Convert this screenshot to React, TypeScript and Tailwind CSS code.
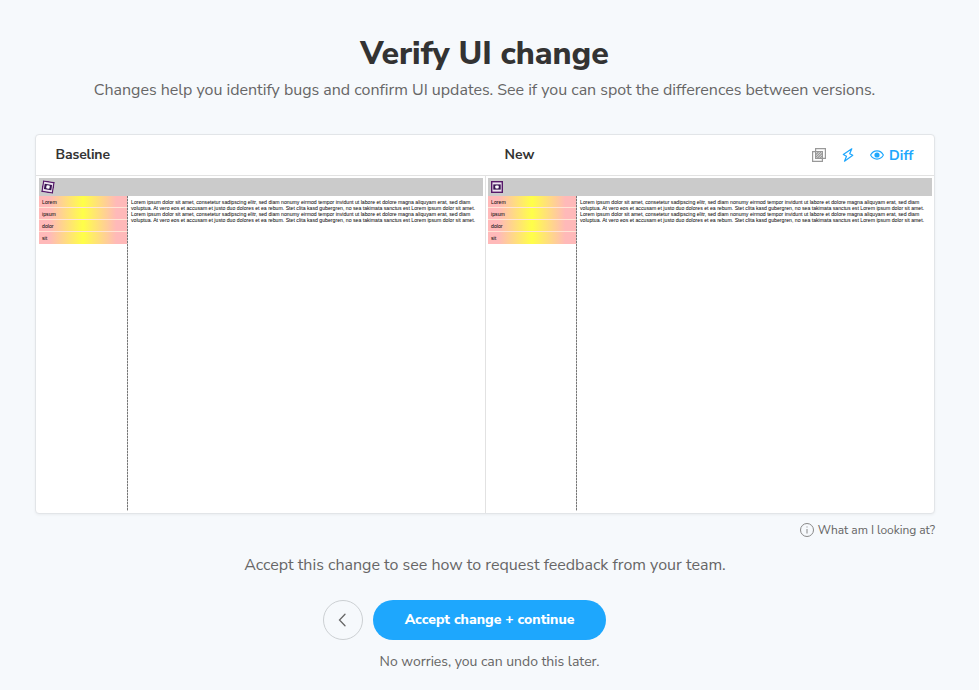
const menu = ["Lorem", "ipsum", "dolor", "sit"];
const lines = [
  "Lorem ipsum dolor sit amet, consetetur sadipscing elitr, sed diam nonumy eirmod tempor invidunt ut labore et dolore magna aliquyam erat, sed diam",
  "voluptua. At vero eos et accusam et justo duo dolores et ea rebum. Stet clita kasd gubergren, no sea takimata sanctus est Lorem ipsum dolor sit amet.",
];

function Logo({ tilted }: { tilted?: boolean }) {
  return (
    <svg viewBox="0 0 12 12" className={tilted ? "ml-[3px] h-3 w-3 rotate-[9deg]" : "ml-[3px] h-3 w-3"}>
      <rect x="0.7" y="0.7" width="10.6" height="10.6" fill="#eee3f1" stroke="#56196a" strokeWidth="1.4" />
      <rect x="2.3" y="3.4" width="7.4" height="5.2" fill="#35124f" />
      <rect x="4.3" y="4.4" width="3.4" height="3.2" rx="0.8" fill="#fff" />
    </svg>
  );
}

function Snapshot({ tilted }: { tilted?: boolean }) {
  return (
    <div className="flex h-[333px] w-[444px] flex-col font-['Liberation_Sans',sans-serif] text-[#111] [-webkit-text-stroke:0.04px_#222]">
      <div className="flex h-[18px] shrink-0 items-center bg-[#cbcbcb]">
        <Logo tilted={tilted} />
      </div>
      <div className="flex flex-1">
        <div className="w-[88px] shrink-0">
          {menu.map((m) => (
            <div
              key={m}
              className="flex h-3 items-center border-b border-[#ffe3d5] bg-[linear-gradient(90deg,#ffb9b9_0%,#ffb9b9_12%,#ffff48_50%,#ffb9b9_88%,#ffb9b9_100%)] pt-0.5 pl-[3px] text-[5.2px] leading-none last:border-b-0 last:pt-px"
            >
              {m}
            </div>
          ))}
        </div>
        <div className="w-px shrink-0 bg-[repeating-linear-gradient(180deg,#777_0px,#777_2px,#c8c8c8_2px,#c8c8c8_3px)]" />
        <div className="pt-[3px] pl-[3px] text-[5.18px] leading-[6px] whitespace-nowrap">
          {[...lines, ...lines].map((l, i) => (
            <div key={i}>{l}</div>
          ))}
        </div>
      </div>
    </div>
  );
}

function OverlayIcon() {
  return (
    <svg viewBox="0 0 14 14" className="h-3.5 w-3.5" fill="none" stroke="#999">
      <path d="M3.6 .6h9.800v9.800H3.600z" strokeWidth="1.2" />
      <path d="M.6 3.600h9.800v9.800H.600z" strokeWidth="1.2" />
      <path d="M4 6.500l2.500-2.500M4 9l5-5M5 10.500l5-5M7.500 10.500l2.500-2.500" strokeWidth="1.2" />
    </svg>
  );
}

function BoltIcon() {
  return (
    <svg viewBox="0 0 12 14" className="h-3.5 w-3" fill="none" stroke="#1ea7fd" strokeWidth="1.2" strokeLinejoin="round">
      <path d="M9.800 .8L1.300 6.500l3.200 1.700L2.500 13.200l8.300-5.900-3.100-1.600z" />
    </svg>
  );
}

function EyeIcon() {
  return (
    <svg viewBox="0 0 14 14" className="h-3.5 w-3.5" fill="none" stroke="#1ea7fd" strokeWidth="1.1">
      <path d="M.6 7C2 4.400 4.300 2.900 7 2.900S12 4.400 13.400 7C12 9.600 9.700 11.100 7 11.100S2 9.600.6 7z" />
      <circle cx="7" cy="7" r="2.600" fill="#1ea7fd" stroke="none" />
    </svg>
  );
}

export default function App() {
  return (
    <main className="h-[690px] w-full bg-[#f6f9fc] font-['Nunito_Sans',Nunito,sans-serif] text-[#666]">
      <div className="ml-[35px] flex w-[900px] flex-col pt-[34px]">
        <h1 className="-ml-px text-center text-[32px] leading-10 font-extrabold tracking-[-0.03px] text-[#333]">Verify UI change</h1>
        <p className="mt-1 -ml-px text-center text-base leading-6 tracking-[-0.012px]">
          Changes help you identify bugs and confirm UI updates. See if you can spot the differences between versions.
        </p>
        <section className="mt-8 h-[380px] rounded-[4px] border border-[#e2e5e8] bg-white shadow-[0_1px_3px_rgba(0,0,0,0.05)]">
          <header className="flex h-[41px] items-center border-b border-[#e2e2e2] text-sm font-bold text-[#333]">
            <span className="w-[449px] pl-[19.5px] tracking-[-0.15px]">Baseline</span>
            <span className="flex-1 pl-[19.5px]">New</span>
            <OverlayIcon />
            <span className="ml-4">
              <BoltIcon />
            </span>
            <span className="ml-4 flex items-center gap-[5px] pr-[20.5px] text-[#1ea7fd]">
              <EyeIcon />
              <span className="pt-px tracking-[0.1px]">Diff</span>
            </span>
          </header>
          <div className="flex h-[337px]">
            <div className="w-[450px] border-r border-[#e2e2e2] pt-0.5 pl-[3px]">
              <Snapshot tilted />
            </div>
            <div className="pt-0.5 pl-0.5">
              <Snapshot />
            </div>
          </div>
        </section>
        <div className="mt-2 flex h-4 items-center justify-end gap-1 text-xs tracking-[-0.04px]">
          <svg viewBox="0 0 14 14" className="h-3.5 w-3.5" fill="none" stroke="#888">
            <circle cx="7" cy="7" r="6.500" />
            <path d="M7 6v4.500M7 3.500v1" />
          </svg>
          What am I looking at?
        </div>
        <p className="mt-[15px] text-center text-base leading-6">
          Accept this change to see how to request feedback from your team.
        </p>
      </div>
      <div className="mt-[23px] flex pl-[323px]">
        <button className="flex h-10 w-10 items-center justify-center rounded-full border border-[#ccd0d3]">
          <svg viewBox="0 0 14 14" className="h-3.5 w-3.5" fill="none" stroke="#666" strokeWidth="1.3" strokeLinecap="round">
            <path d="M9 1.300L3.500 7 9 12.700" />
          </svg>
        </button>
        <button className="ml-2.5 h-10 w-[233px] rounded-full bg-[#1ea7fd] text-sm font-extrabold text-white">
          Accept change + continue
        </button>
      </div>
      <p className="mt-3 text-center text-sm leading-5 tracking-[-0.02px]">No worries, you can undo this later.</p>
    </main>
  );
}
